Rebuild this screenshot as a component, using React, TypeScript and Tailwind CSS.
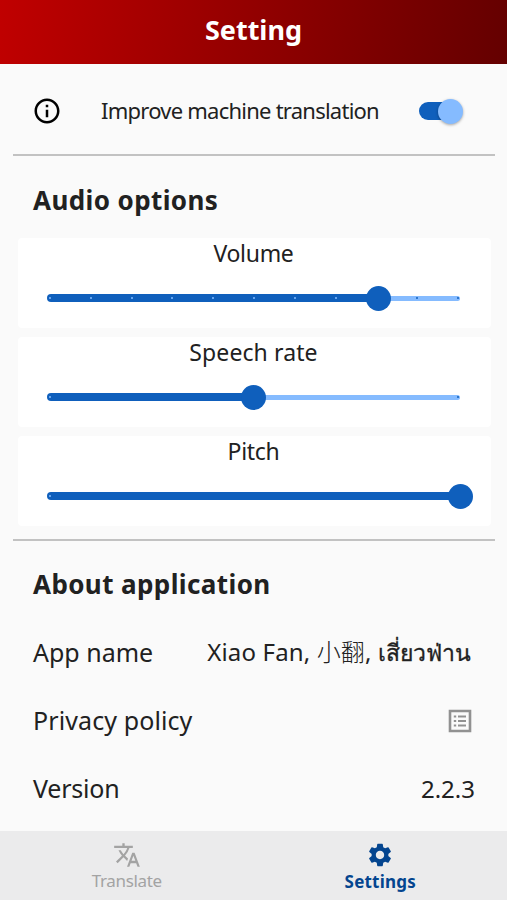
import { useState } from "react";
import { MdInfoOutline, MdSettings, MdTranslate } from "react-icons/md";

type SliderProps = {
  label: string;
  labelClass: string;
  value: number;
  ticks: number[];
};

const TRACK_WIDTH = 408;

const SliderCard = ({ label, labelClass, value, ticks }: SliderProps) => {
  // the thumb travels slightly past the last tick
  const filled = (TRACK_WIDTH + 2) * value;

  return (
    <div className="h-[90px] rounded-[4px] bg-white">
      <div className="flex h-[34px] items-center justify-center pr-[2px] pb-[3px]">
        <span className={labelClass}>{label}</span>
      </div>
      <div className="relative ml-[32px] mt-[13px] flex h-[26px] w-[408px] items-center">
        <div className="absolute -left-[2px] h-[5px] w-[412px] rounded-full bg-[#85bbff]" />
        <div
          className="absolute -left-[3px] h-[8px] rounded-full bg-[#0f5fbc]"
          style={{ width: filled + 3 }}
        />
        {ticks.map((tick) => (
          <span
            key={tick}
            className={`absolute size-[2px] rounded-full ${tick <= value ? "bg-[#85bbff]" : "bg-[#0f5fbc]"}`}
            style={{ left: tick * TRACK_WIDTH - 1 }}
          />
        ))}
        <div
          className="absolute size-[25px] rounded-full bg-[#0f5fbc]"
          style={{ left: filled - 12.5 }}
        />
      </div>
    </div>
  );
};

const ListIcon = () => (
  <svg viewBox="0 0 24 24" className="mr-[3px] size-[24px]" fill="none" stroke="#919191">
    <path d="M2 2h20v20H2z" strokeWidth="2.6" />
    <path d="M5.8 7.5h2.4M5.8 12h2.4M5.8 16.5h2.4M10 7.5h8M10 12h8M10 16.5h8" strokeWidth="2.2" />
  </svg>
);

const App = () => {
  const [improve, setImprove] = useState(true);

  return (
    <div className="flex h-[900px] w-[507px] flex-col overflow-hidden bg-[#fafafa] font-['Noto_Sans','Noto_Sans_CJK_SC',sans-serif] whitespace-nowrap text-[#212121]">
      <header className="flex h-[64px] shrink-0 items-center justify-center bg-[linear-gradient(97deg,#c00000,#640000)] pb-[3px]">
        <h1 className="text-[27px] font-bold text-white">Setting</h1>
      </header>

      <main className="flex-1 pr-[12px] pl-[13px]">
        <div className="flex h-[92px] items-center border-b-2 border-[#c2c2c2] pt-[4px] pr-[31px] pl-[19px]">
          <MdInfoOutline className="size-[30px] text-black" />
          <span className="ml-[39px] w-[280px] pb-[2px] text-[22px] tracking-[-0.76px]">
            Improve machine translation
          </span>
          <button
            role="switch"
            aria-checked={improve}
            onClick={() => setImprove(!improve)}
            className="relative ml-auto flex h-[26px] w-[45px] items-center"
          >
            <span className="h-[18px] w-[40px] rounded-full bg-[#0f5fbc]" />
            <span
              className={`absolute size-[25px] rounded-full bg-[#85bbff] shadow-[0_1px_3px_rgba(0,0,0,0.35)] ${improve ? "right-px" : "left-0"}`}
            />
          </button>
        </div>

        <h2 className="flex h-[82px] items-center pt-[6px] pl-[20px] text-[26px] font-bold tracking-[0.4px]">
          Audio options
        </h2>
        <section className="flex h-[303px] flex-col gap-[9px] border-b-2 border-[#c2c2c2] pr-[4px] pl-[5px]">
          <SliderCard
            label="Volume"
            labelClass="text-[23px] tracking-[-0.3px]"
            value={0.801}
            ticks={[0, 0.1, 0.2, 0.3, 0.4, 0.5, 0.6, 0.7, 0.9, 1]}
          />
          <SliderCard label="Speech rate" labelClass="text-[23px] tracking-[0.1px]" value={0.497} ticks={[0, 1]} />
          <SliderCard label="Pitch" labelClass="text-[23px] tracking-[-0.3px]" value={1} ticks={[0]} />
        </section>

        <h2 className="flex h-[77px] items-center pt-[10px] pl-[20px] text-[26px] font-bold tracking-[0.4px]">
          About application
        </h2>
        <section className="pr-[20px] pl-[20px]">
          <div className="flex h-[69px] items-center justify-between">
            <span className="text-[25px]">App name</span>
            <span className="mr-[4px] pb-[2px] text-[24px] tracking-[0.15px]">
              Xiao Fan, <span className="font-light">小翻</span>,{" "}
              <span className="text-[23px] tracking-normal [-webkit-text-stroke:0.3px]">เสี่ยวฟ่าน</span>
            </span>
          </div>
          <div className="flex h-[68px] items-center justify-between">
            <span className="text-[25px] tracking-[0.1px]">Privacy policy</span>
            <ListIcon />
          </div>
          <div className="flex h-[69px] items-center justify-between">
            <span className="pb-px text-[25px] tracking-[-0.2px]">Version</span>
            <span className="pb-[2px] text-[24px]">2.2.3</span>
          </div>
        </section>
      </main>

      <nav className="grid h-[69px] shrink-0 grid-cols-2 bg-[#ebebec]">
        <div className="flex flex-col items-center pt-[10px] text-[#a3a3a3]">
          <MdTranslate className="size-[28px]" />
          <span className="text-[17px] leading-[24px] tracking-[-0.35px]">Translate</span>
        </div>
        <div className="flex flex-col items-center pt-[10px] text-[#04458f]">
          <MdSettings className="size-[28px]" />
          <span className="pt-px text-[17px] leading-[24px] font-bold tracking-[0.2px]">Settings</span>
        </div>
      </nav>
    </div>
  );
};

export default App;
